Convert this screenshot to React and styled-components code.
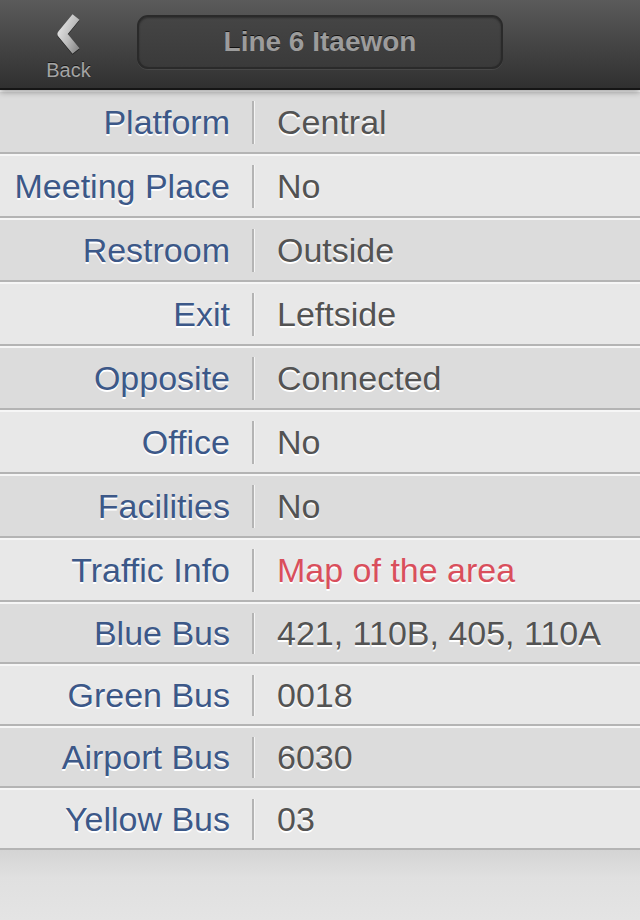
import React from "react";
import styled, { createGlobalStyle } from "styled-components";

const GlobalStyle = createGlobalStyle`
    html, body {
        margin: 0;
        padding: 0;
        background: #e2e2e2;
    }
    body {
        font-family: "Liberation Sans", Arial, Helvetica, sans-serif;
    }
`;

const Screen = styled.div`
    width: 640px;
    height: 920px;
    display: flex;
    flex-direction: column;
    overflow: hidden;
`;

const NavBar = styled.header`
    position: relative;
    z-index: 2;
    height: 88px;
    display: grid;
    grid-template-columns: 137px 366px 137px;
    align-items: start;
    background: linear-gradient(#5b5b5b, #454545 50%, #303030);
    border-bottom: 2px solid #151515;
    box-shadow: 0 2px 6px rgba(0, 0, 0, 0.35);
`;

const BackButton = styled.div`
    display: flex;
    flex-direction: column;
    align-items: center;
    padding-top: 12px;
    cursor: pointer;
`;

const BackLabel = styled.span`
    margin-top: 4px;
    font-size: 20px;
    line-height: 20px;
    color: #a4a4a4;
    text-shadow: 0 -1px 0 rgba(0, 0, 0, 0.6);
`;

const TitleBox = styled.div`
    margin-top: 15px;
    height: 50px;
    display: flex;
    align-items: center;
    justify-content: center;
    border: 2px solid #2a2a2a;
    border-radius: 11px;
    background: linear-gradient(#454545, #3a3a3a);
    box-shadow: 0 1px 0 rgba(255, 255, 255, 0.08),
        inset 0 1px 2px rgba(0, 0, 0, 0.35);
`;

const Title = styled.h1`
    margin: 0;
    font-size: 28px;
    font-weight: bold;
    color: #9c9c9c;
    text-shadow: 0 -1px 0 rgba(0, 0, 0, 0.7);
`;

const List = styled.div`
    display: flex;
    flex-direction: column;
`;

const Row = styled.div`
    display: grid;
    grid-template-columns: 252px 2px 1fr;
    align-items: center;
    height: ${(p) => p.$height}px;
    border-top: 2px solid #f6f6f6;
    border-bottom: 2px solid #b4b4b4;
    background: ${(p) => (p.$odd ? "#dcdcdc" : "#e8e8e8")};
`;

const Label = styled.div`
    padding-right: 22px;
    text-align: right;
    font-size: 34px;
    line-height: 1;
    color: #3c5888;
    white-space: nowrap;
    text-shadow: 0 2px 0 #fff;
`;

const Divider = styled.div`
    height: ${(p) => p.$height}px;
    background: #b4b4b4;
    box-shadow: 1px 0 0 #f4f4f4;
`;

const Value = styled.div`
    padding-left: 23px;
    font-size: 34px;
    line-height: 1;
    color: ${(p) => (p.$link ? "#d94f5c" : "#535353")};
    white-space: nowrap;
    text-shadow: 0 2px 0 #fff;
`;

const Footer = styled.div`
    flex: 1;
    background: linear-gradient(#d4d4d4, #e0e0e0 40%, #e4e4e4);
`;

const rows = [
    { label: "Platform", value: "Central" },
    { label: "Meeting Place", value: "No" },
    { label: "Restroom", value: "Outside" },
    { label: "Exit", value: "Leftside" },
    { label: "Opposite", value: "Connected" },
    { label: "Office", value: "No" },
    { label: "Facilities", value: "No" },
    { label: "Traffic Info", value: "Map of the area", link: true },
    { label: "Blue Bus", value: "421, 110B, 405, 110A", compact: true },
    { label: "Green Bus", value: "0018", compact: true },
    { label: "Airport Bus", value: "6030", compact: true },
    { label: "Yellow Bus", value: "03", compact: true },
];

const BackChevron = () => (
    <svg width="30" height="44" viewBox="0 0 30 44">
        <defs>
            <linearGradient id="chev" x1="0" y1="0" x2="1" y2="1">
                <stop offset="0" stopColor="#e4e4e4" />
                <stop offset="0.55" stopColor="#bdbdbd" />
                <stop offset="1" stopColor="#8e8e8e" />
            </linearGradient>
        </defs>
        <path
            d="M22 5 L8 22 L22 39"
            fill="none"
            stroke="rgba(0,0,0,0.5)"
            strokeWidth="9"
            strokeLinejoin="round"
            transform="translate(0 1)"
        />
        <path
            d="M22 5 L8 22 L22 39"
            fill="none"
            stroke="url(#chev)"
            strokeWidth="9"
            strokeLinejoin="round"
        />
    </svg>
);

export default function App() {
    return (
        <Screen>
            <GlobalStyle />
            <NavBar>
                <BackButton>
                    <BackChevron />
                    <BackLabel>Back</BackLabel>
                </BackButton>
                <TitleBox>
                    <Title>Line 6 Itaewon</Title>
                </TitleBox>
            </NavBar>
            <List>
                {rows.map((row, i) => (
                    <Row
                        key={row.label}
                        $odd={i % 2 === 0}
                        $height={row.compact ? 58 : 60}
                    >
                        <Label>{row.label}</Label>
                        <Divider $height={row.compact ? 41 : 43} />
                        <Value $link={row.link}>{row.value}</Value>
                    </Row>
                ))}
            </List>
            <Footer />
        </Screen>
    );
}
